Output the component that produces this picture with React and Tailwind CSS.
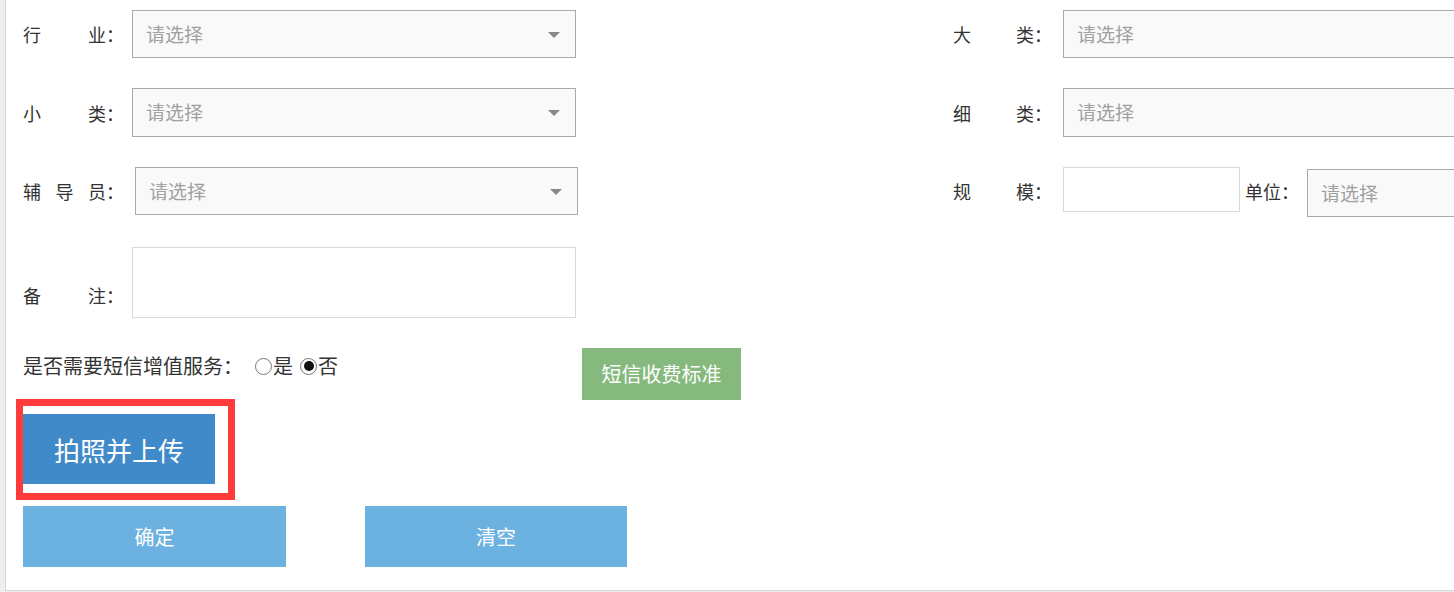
import React, { useState } from 'react';

const font = { fontFamily: '"Microsoft YaHei", "Noto Sans CJK SC", "Noto Sans", sans-serif' };

function Label({ chars, className = '' }) {
    return (
        <div className={`flex shrink-0 justify-between text-[18px] leading-[24px] text-[#333] ${className}`}>
            {chars.map((c, i) => (
                <span key={i}>{c}</span>
            ))}
        </div>
    );
}

function Select({ className = '', arrow = true }) {
    return (
        <div className={`relative flex h-[48px] shrink-0 items-center border border-[#a9a9a9] bg-[#f9f9f9] pl-[13px] text-[19px] text-[#a0a0a0] ${className}`}>
            请选择
            {arrow && (
                <svg className="absolute right-[15px] top-[21px]" width="12" height="6" viewBox="0 0 12 6">
                    <path d="M0 0h12L6 6z" fill="#888" />
                </svg>
            )}
        </div>
    );
}

function Radio({ checked, label, onClick }) {
    return (
        <span className="flex cursor-pointer items-center" onClick={onClick}>
            <span className="flex h-[17px] w-[17px] items-center justify-center rounded-full border border-[#767676] bg-white">
                {checked && <span className="h-[10px] w-[10px] rounded-full bg-[#111]" />}
            </span>
            <span className="ml-[1px]">{label}</span>
        </span>
    );
}

export default function App() {
    const [sms, setSms] = useState(false);

    return (
        <div className="h-[592px] w-full overflow-hidden bg-[#eeeeee]" style={font}>
            <div className="ml-[5px] h-[591px] border-b border-l border-[#cfd8e1] bg-white pl-[17px] pt-[10px]">
                {/* row 1 */}
                <div className="flex h-[48px] items-center">
                    <div className="flex w-[930px] shrink-0 items-center">
                        <Label chars={['行', '业：']} className="w-[101px]" />
                        <Select className="ml-[8px] w-[444px]" />
                    </div>
                    <Label chars={['大', '类：']} className="w-[99px]" />
                    <Select className="ml-[11px] w-[444px]" arrow={false} />
                </div>

                {/* row 2 */}
                <div className="mt-[30px] flex h-[49px] items-center">
                    <div className="flex w-[930px] shrink-0 items-center">
                        <Label chars={['小', '类：']} className="w-[101px]" />
                        <Select className="ml-[8px] h-[49px] w-[444px]" />
                    </div>
                    <Label chars={['细', '类：']} className="w-[99px]" />
                    <Select className="ml-[11px] h-[49px] w-[444px]" arrow={false} />
                </div>

                {/* row 3 */}
                <div className="mt-[30px] flex h-[50px] items-start">
                    <div className="flex h-[48px] w-[930px] shrink-0 items-center">
                        <Label chars={['辅', '导', '员：']} className="w-[101px]" />
                        <Select className="ml-[11px] w-[443px]" />
                    </div>
                    <Label chars={['规', '模：']} className="mt-[12px] w-[99px]" />
                    <div className="ml-[11px] h-[45px] w-[177px] shrink-0 border border-[#d9d9d9] bg-white" />
                    <span className="ml-[5px] mt-[12px] w-[54px] shrink-0 text-[18px] leading-[24px] text-[#333]">单位：</span>
                    <Select className="ml-[8px] mt-[2px] w-[200px]" arrow={false} />
                </div>

                {/* remark */}
                <div className="mt-[30px] flex items-end">
                    <Label chars={['备', '注：']} className="mb-[11px] w-[101px]" />
                    <div className="ml-[8px] h-[71px] w-[444px] shrink-0 border border-[#d9d9d9] bg-white" />
                </div>

                {/* sms */}
                <div className="mt-[30px] flex items-start">
                    <div className="mt-[6px] flex w-[559px] shrink-0 items-center text-[20px] leading-[24px] text-[#333]">
                        <span className="w-[220px] shrink-0 whitespace-nowrap">是否需要短信增值服务：</span>
                        <span className="ml-[12px] flex items-center">
                            <Radio checked={sms} label="是" onClick={() => setSms(true)} />
                            <span className="ml-[7px]">
                                <Radio checked={!sms} label="否" onClick={() => setSms(false)} />
                            </span>
                        </span>
                    </div>
                    <button
                        type="button"
                        className="flex h-[52px] w-[159px] shrink-0 items-center justify-center bg-[#86b97e] text-[20px] text-white"
                    >
                        短信收费标准
                    </button>
                </div>

                {/* highlighted upload button */}
                <div className="-mt-px ml-[-7px] w-[219px] border-[7px] border-[#ff3b3b] bg-white pb-[9px] pr-[13px] pt-[8px]">
                    <button
                        type="button"
                        className="flex h-[70px] w-[192px] items-center justify-center bg-[#418ac9] text-[26px] text-white"
                    >
                        拍照并上传
                    </button>
                </div>

                {/* actions */}
                <div className="mt-[6px] flex gap-[79px]">
                    <button
                        type="button"
                        className="flex h-[61px] w-[263px] shrink-0 items-center justify-center bg-[#6cb2e0] text-[20px] text-white"
                    >
                        确定
                    </button>
                    <button
                        type="button"
                        className="flex h-[61px] w-[262px] shrink-0 items-center justify-center bg-[#6cb2e0] text-[20px] text-white"
                    >
                        清空
                    </button>
                </div>
            </div>
        </div>
    );
}
